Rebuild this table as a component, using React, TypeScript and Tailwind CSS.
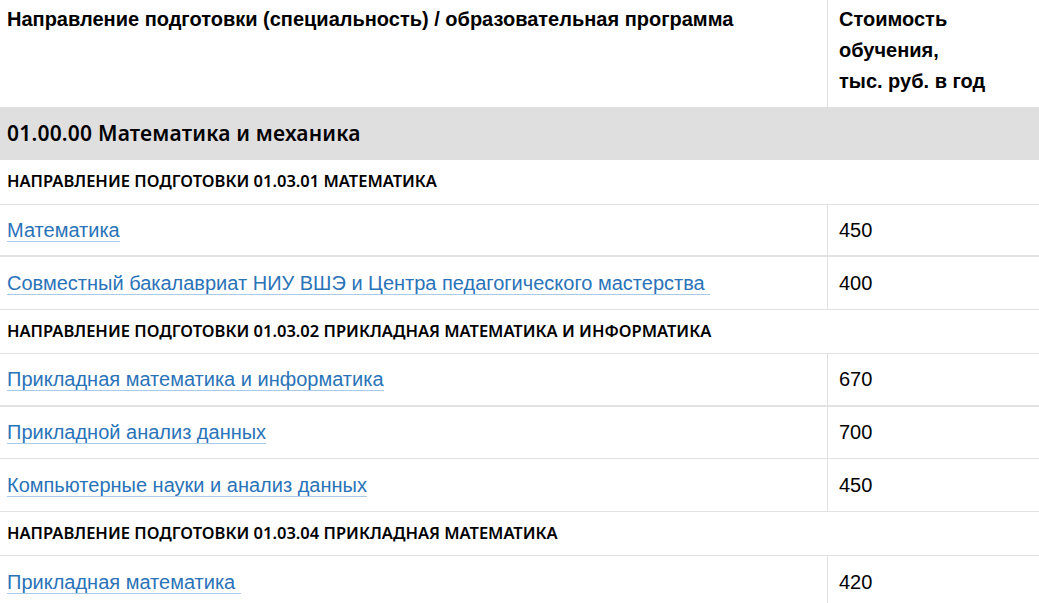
import React from 'react';

type Row =
  | { kind: 'dir'; title: string }
  | { kind: 'prog'; title: string; price: string; thick?: boolean };

const rows: Row[] = [
  { kind: 'dir', title: 'Направление подготовки 01.03.01 Математика' },
  { kind: 'prog', title: 'Математика', price: '450', thick: true },
  { kind: 'prog', title: 'Совместный бакалавриат НИУ ВШЭ и Центра педагогического мастерства\u00a0', price: '400' },
  { kind: 'dir', title: 'Направление подготовки 01.03.02 Прикладная математика и информатика' },
  { kind: 'prog', title: 'Прикладная математика и информатика', price: '670', thick: true },
  { kind: 'prog', title: 'Прикладной анализ данных', price: '700' },
  { kind: 'prog', title: 'Компьютерные науки и анализ данных', price: '450' },
  { kind: 'dir', title: 'Направление подготовки 01.03.04 Прикладная математика' },
  { kind: 'prog', title: 'Прикладная математика\u00a0', price: '420' },
];

const arial = "font-['Liberation_Sans',Arial,sans-serif]";
const geo = "font-['Noto_Sans',sans-serif]";

const App = () => {
  return (
    <div className={`w-[1039px] h-[603px] overflow-hidden bg-white text-black ${arial}`}>
      {/* header */}
      <div className="grid grid-cols-[827px_1fr] h-[107px] text-[20px] font-bold leading-[31px]">
        <div className="pl-[7px] pt-[4px]">
          Направление подготовки (специальность) / образовательная программа
        </div>
        <div className="border-l border-[#e2e2e2] pl-[11px] pt-[4px]">
          Стоимость
          <br />
          обучения,
          <br />
          тыс. руб. в год
        </div>
      </div>

      {/* section */}
      <div className={`h-[53px] bg-[#e0dfe0] flex items-center pl-[7px] text-[21px] font-semibold tracking-[0.2px] ${geo}`}>
        01.00.00 Математика и механика
      </div>

      {rows.map((r, i) =>
        r.kind === 'dir' ? (
          <div
            key={i}
            className={`h-[44.5px] flex items-center pl-[7px] border-b border-[#e2e2e2] text-[16.5px] font-semibold uppercase ${geo}`}
          >
            {r.title}
          </div>
        ) : (
          <div
            key={i}
            className={`grid grid-cols-[827px_1fr] h-[52.5px] border-[#e2e2e2] ${r.thick ? 'border-b-2' : 'border-b'}`}
          >
            <div className="flex items-center pl-[7px] pt-[1px] text-[20px]">
              <a href="#" className="text-[#2a73b8] border-b border-[#a9cbe9] leading-[22px] whitespace-pre">
                {r.title}
              </a>
            </div>
            <div className="flex items-center border-l border-[#e2e2e2] pl-[11px] text-[20px]">
              {r.price}
            </div>
          </div>
        )
      )}
    </div>
  );
};

export default App;
